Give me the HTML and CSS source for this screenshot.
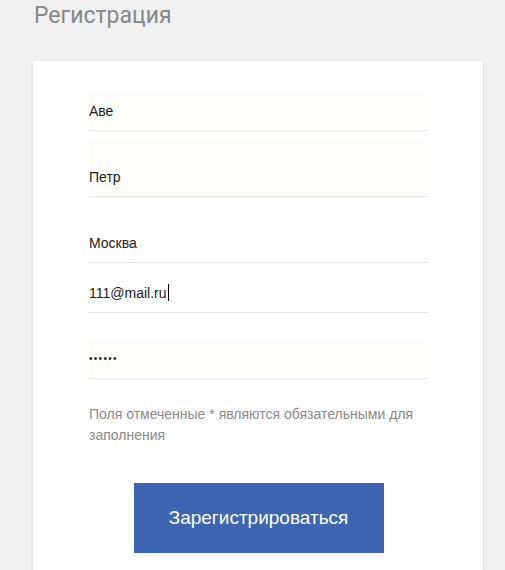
FILE: index.html
```html
<!DOCTYPE html>
<html lang="ru">
<head>
<meta charset="utf-8">
<title>Регистрация</title>
<link rel="stylesheet" href="styles.css">
</head>
<body>
<h1 class="title">Регистрация</h1>
<form class="card">
  <div class="field filled first"><span class="value">Аве</span></div>
  <div class="field filled tall"><span class="value">Петр</span></div>
  <div class="field"><span class="value">Москва</span></div>
  <div class="field near"><span class="value">111@mail.ru</span><span class="caret"></span></div>
  <div class="field filled"><span class="value dots">••••••</span></div>
  <p class="note">Поля отмеченные * являются обязательными для заполнения</p>
  <div class="actions"><button type="button" class="submit">Зарегистрироваться</button></div>
</form>
</body>
</html>
```
FILE: styles.css
```css
html, body {
  margin: 0;
  padding: 0;
  background: #f1f1f1;
}
body {
  font-family: "Liberation Sans", Arial, sans-serif;
  overflow: hidden;
}
.title {
  margin: 0;
  padding: 2px 0 0 34px;
  height: 29px;
  font-family: Roboto, "Liberation Sans", sans-serif;
  font-weight: 400;
  font-size: 23px;
  line-height: 28px;
  color: #878787;
}
.card {
  margin: 30px 0 0 33px;
  width: 339px;
  min-height: 477px;
  padding: 32px 55px 0 56px;
  background: #fff;
  box-shadow: 0 1px 4px rgba(0, 0, 0, 0.09);
  box-sizing: content-box;
}
.field {
  display: flex;
  align-items: center;
  height: 35px;
  padding-bottom: 2px;
  margin-top: 28px;
  border-bottom: 1px solid #e6e6e6;
  font-size: 14px;
  color: #1c1c1c;
}
.field.first {
  margin-top: 0;
}
.field.tall {
  margin-top: 9px;
  padding-top: 19px;
}
.field.near {
  margin-top: 12px;
}
.field.filled {
  background: #fdfdfa;
}
.caret {
  display: inline-block;
  width: 1px;
  height: 17px;
  margin-left: 1px;
  background: #000;
}
.dots {
  font-size: 10px;
  letter-spacing: 1.3px;
}
.note {
  margin: 25px 0 0;
  font-size: 14px;
  line-height: 21px;
  color: #8a8a8a;
}
.actions {
  display: flex;
  justify-content: center;
  margin-top: 37px;
}
.submit {
  width: 250px;
  height: 70px;
  border: 0;
  border-radius: 0;
  background: #3d65b1;
  color: #fff;
  font-family: "Liberation Sans", Arial, sans-serif;
  font-size: 19px;
  padding: 0;
}
```
